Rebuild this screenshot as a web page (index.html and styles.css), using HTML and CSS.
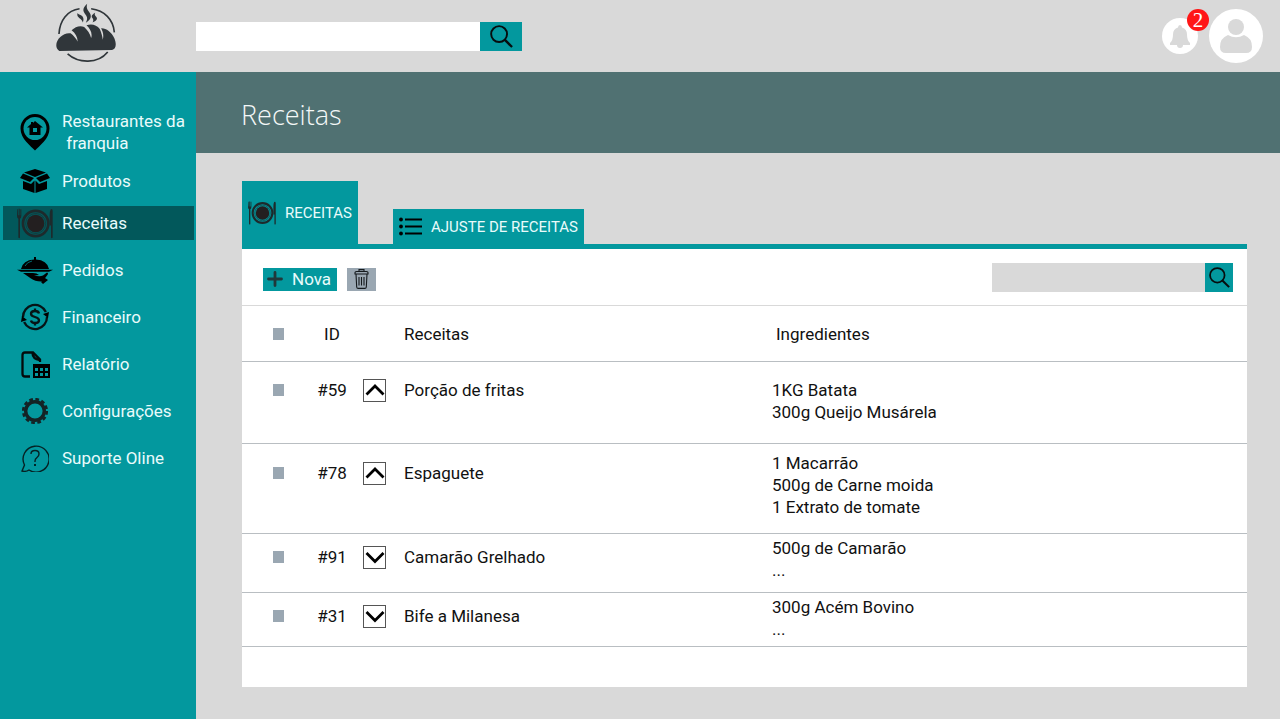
FILE: index.html
```html
<!DOCTYPE html>
<html lang="pt-BR">
<head>
<meta charset="utf-8">
<meta name="viewport" content="width=device-width, initial-scale=1">
<title>Receitas</title>
<link rel="stylesheet" href="styles.css">
</head>
<body>
<svg class="sprite" aria-hidden="true">
  <symbol id="search" viewBox="0 0 24 24"><g fill="none" stroke="#060d0e" stroke-width="2"><circle cx="9.500" cy="9.500" r="8.300"/><path d="M15.300 15.300 23 23" stroke-width="2.400"/></g></symbol>
  <symbol id="plate" viewBox="0 0 108 92"><g fill="#1d2a2c"><circle cx="56" cy="46" r="26" fill="#231f20"/><circle cx="56" cy="46" r="38" fill="none" stroke="#1d2a2c" stroke-width="8"/><circle cx="56" cy="46" r="30" fill="none" stroke="#1d2a2c" stroke-width="2"/><path d="M1 3h2v18h2V2h3v19h2V3h3v20q0 7-4 9v56q-2 4-5 0V32q-4-2-4-9zM101 4q5-4 6 4v80q-3 4-5 0V52h-4V20q0-10 3-16z"/></g></symbol>
  <symbol id="up" viewBox="0 0 20 20"><path d="M1.500 13.500 10 5l8.500 8.500" fill="none" stroke="#000" stroke-width="2.800"/></symbol>
  <symbol id="down" viewBox="0 0 20 20"><path d="M1.500 5 10 13.500 18.500 5" fill="none" stroke="#000" stroke-width="2.800"/></symbol>
</svg>
<header class="topbar">
  <a class="brand" href="#" aria-label="Início">
    <svg viewBox="165 10 187 180" width="62" height="60">
      <g fill="none" stroke="#30363a" stroke-width="5"><path d="M177 103C179 62 202 32 239 27M274 27C314 32 341 59 344 98M203 163C236 192 294 194 324 157"/></g>
      <g fill="#30363a">
        <path d="M178 154C164 146 167 124 181 112 190 104 201 99 212 101 221 108 229 117 233 126 234 115 227 101 215 92 226 81 241 76 253 82 263 91 271 103 274 115 279 101 270 86 260 77 274 71 291 75 300 88 305 99 308 110 309 120 313 107 309 95 304 86 319 85 335 97 344 116 352 136 348 148 337 151 286 153 229 152 178 154Z"/>
        <path d="M262 12C243 28 252 38 259 47 264 54 262 61 258 69 274 61 277 48 268 37 260 27 260 21 262 12ZM233 40C230 50 237 54 242 58 247 62 247 65 249 68 254 57 249 49 242 46 236 43 234 43 233 40ZM286 39C274 46 274 51 279 56 282 61 280 65 278 68 290 64 295 57 289 51 284 45 284 43 286 39Z"/>
      </g>
    </svg>
  </a>
  <form class="search search-main" role="search">
    <input type="search" aria-label="Pesquisar">
    <button type="button" aria-label="Pesquisar"><svg width="23" height="23"><use href="#search"/></svg></button>
  </form>
  <div class="account">
    <button class="bell" type="button" aria-label="Notificações">
      <svg viewBox="0 0 20 23" width="20" height="23"><path d="M10 0q2 0 2 2.500 5 1.500 5 7 0 6 3 8.500v2h-7a3 3 0 0 1-6 0H0v-2q3-2.500 3-8.500 0-5.500 5-7Q8 0 10 0z" fill="#d9d9d9"/></svg>
      <span class="badge">2</span>
    </button>
    <button class="avatar" type="button" aria-label="Perfil">
      <svg viewBox="0 0 32 36" width="32" height="36"><g fill="#d9d9d9"><circle cx="16" cy="9" r="8"/><path d="M8 17q8 4.500 16 0 8 3 8 12 0 6-6 6H6q-6 0-6-6 0-9 8-12z"/></g></svg>
    </button>
  </div>
</header>
<div class="shell">
  <nav class="sidebar" aria-label="Principal">
    <div class="group">
      <a class="item" href="#"><svg viewBox="0 0 30 37" width="30" height="37"><path d="M15 0a14.500 14.500 0 0 1 14.500 14.500C29.500 25 19 32 15 36.500 11 32 .5 25 .5 14.500A14.500 14.500 0 0 1 15 0z"/><circle cx="15" cy="14.500" r="11.500" fill="#03989e"/><path d="M15 7l8 6.500h-2.500V21h-11v-7.500H7L11 10V8h2v1z"/><path d="M13 14h4v4h-4z" fill="#03989e"/></svg><span>Restaurantes da<br>&nbsp;franquia</span></a>
      <a class="item" href="#"><svg viewBox="0 0 30 26" width="30" height="26"><path d="M15 1l11 3.500-11 4.500L4 4.500zM3 5.500l11 4.500-4 4L0 10zM27 5.500L16 10l4 4 10-4zM3 13l8 3 3.500-3.500V25L3 21zM27 13l-8 3-3.500-3.500V25L27 21z"/></svg><span>Produtos</span></a>
      <a class="item active" href="#" aria-current="page"><svg width="36" height="31"><use href="#plate"/></svg><span>Receitas</span></a>
    </div>
    <div class="group spaced">
      <a class="item" href="#"><svg viewBox="0 0 36 27" width="36" height="27"><path d="M4 12Q6 3 17 2.500V0h2v2.500Q30 3 32 12zM0 12.800h36l-4 2H4zM6 16h10q4 0 6 2l-5 .5q6 1.500 9 0l4-3q2 .5 0 3l-3 4-3 2q-6 0-10-3zM28 21l3 2-5 4-2-2z"/><path d="M8 9q2-4 7-5" fill="none" stroke="#03989e" stroke-width=".7"/></svg><span>Pedidos</span></a>
      <a class="item" href="#"><svg viewBox="0 0 28 28" width="28" height="28"><g fill="none" stroke="#061416" stroke-width="2.300"><path d="M2 14A12 12 0 0 1 24.900 8.900M26 14A12 12 0 0 1 3.100 19.100"/><path d="M18 10.500q-.5-2.500-4-2.500-4 0-4 2.800 0 2.200 4 3.200 4 1 4 3.200 0 2.800-4 2.800-3.500 0-4-2.500M14 5.500V8M14 20v2.500"/></g><path d="M28 9l-1 6-5-4zM0 19l1-6 5 4z"/></svg><span>Financeiro</span></a>
      <a class="item" href="#"><svg viewBox="0 0 29 27" width="29" height="27"><path d="M9 25.500H4q-2.500 0-2.500-2.500V4Q1.500 1.500 4 1.500h8l7 7V11M11.500 2q0 6 7.500 7" fill="none" stroke="#040a0b" stroke-width="2.300"/><path d="M12 13h17v14H12z"/><path d="M14 17h3v3h-3zM19 17h3v3h-3zM24 17h3v3h-3zM14 22h3v3h-3zM19 22h3v3h-3zM24 22h3v3h-3z" fill="#03989e"/></svg><span>Relatório</span></a>
      <a class="item" href="#"><svg viewBox="0 0 26 26" width="26" height="26"><g fill="none" stroke="#142325"><circle cx="13" cy="13" r="9.300" stroke-width="3.400"/><circle cx="13" cy="13" r="11.800" stroke-width="2.600" stroke-dasharray="3.700 2.479"/></g></svg><span>Configurações</span></a>
      <a class="item" href="#"><svg viewBox="0 0 28 28" width="28" height="28"><path d="M1 27l2.500-6A13 13 0 1 1 8 26q-3 2-7 1zM10 10q0-3.500 4-3.500t4 3.500q0 2-2 3.500t-2 3.500v1" fill="none" stroke="#062224" stroke-width="1.400"/><circle cx="14" cy="21" r="1"/></svg><span>Suporte Oline</span></a>
    </div>
  </nav>
  <main>
    <div class="titlebar"><h1>Receitas</h1></div>
    <div class="content">
      <div class="tabs" role="tablist">
        <button class="tab selected" type="button" role="tab" aria-selected="true"><svg width="28" height="24"><use href="#plate"/></svg>RECEITAS</button>
        <button class="tab" type="button" role="tab" aria-selected="false"><svg viewBox="0 0 23 19" width="23" height="19"><path d="M6 2.500h17M6 9.500h17M6 16.500h17" stroke="#000" stroke-width="2.200"/><circle cx="2" cy="2.500" r="1.900"/><circle cx="2" cy="9.500" r="1.900"/><circle cx="2" cy="16.500" r="1.900"/></svg>AJUSTE DE RECEITAS</button>
      </div>
      <section class="panel">
        <div class="toolbar">
          <button class="new" type="button"><svg viewBox="0 0 16 16" width="16" height="16"><path d="M8 1.500v13M1.500 8h13" stroke="#20383b" stroke-width="2.800" stroke-linecap="round"/></svg>Nova</button>
          <button class="trash" type="button" aria-label="Excluir"><svg viewBox="0 0 15 20" width="15" height="20"><g fill="none" stroke="#14191c" stroke-width="1.100"><path d="M1 5V3.500Q1 2.500 2.500 2.500h10Q14 2.500 14 3.500V5zM5 2.500V.6h5v1.900M2 5l.7 13q.1 1.400 1.500 1.400h6.600q1.400 0 1.500-1.400L13 5M5 8v8.500M7.500 8v8.500M10 8v8.500"/></g></svg></button>
          <form class="search search-table" role="search">
            <input type="search" aria-label="Pesquisar receitas">
            <button type="button" aria-label="Pesquisar receitas"><svg width="21" height="21"><use href="#search"/></svg></button>
          </form>
        </div>
        <table>
          <colgroup><col class="c-check"><col class="c-id"><col class="c-toggle"><col><col class="c-ingr"></colgroup>
          <thead>
            <tr><th><input type="checkbox" aria-label="Selecionar todas"></th><th class="id">ID</th><th></th><th>Receitas</th><th>Ingredientes</th></tr>
          </thead>
          <tbody>
            <tr class="two"><td><input type="checkbox" aria-label="Selecionar #59"></td><td class="id">#59</td><td><button class="toggle" type="button" aria-label="Recolher" aria-expanded="true"><svg width="20" height="20"><use href="#up"/></svg></button></td><td>Porção de fritas</td><td>1KG Batata<br>300g Queijo Musárela</td></tr>
            <tr class="three"><td><input type="checkbox" aria-label="Selecionar #78"></td><td class="id">#78</td><td><button class="toggle" type="button" aria-label="Recolher" aria-expanded="true"><svg width="20" height="20"><use href="#up"/></svg></button></td><td>Espaguete</td><td class="ingr">1 Macarrão<br>500g de Carne moida<br>1 Extrato de tomate</td></tr>
            <tr class="closed"><td><input type="checkbox" aria-label="Selecionar #91"></td><td class="id">#91</td><td><button class="toggle" type="button" aria-label="Expandir" aria-expanded="false"><svg width="20" height="20"><use href="#down"/></svg></button></td><td>Camarão Grelhado</td><td class="ingr">500g de Camarão<br>...</td></tr>
            <tr class="closed"><td><input type="checkbox" aria-label="Selecionar #31"></td><td class="id">#31</td><td><button class="toggle" type="button" aria-label="Expandir" aria-expanded="false"><svg width="20" height="20"><use href="#down"/></svg></button></td><td>Bife a Milanesa</td><td class="ingr">300g Acém Bovino<br>...</td></tr>
          </tbody>
        </table>
      </section>
    </div>
  </main>
</div>
</body>
</html>
```

FILE: styles.css
```css
* { box-sizing: border-box; }
body {
  margin: 0;
  min-height: 100vh;
  display: flex;
  flex-direction: column;
  background: #d9d9d9;
  color: #111;
  font: 17px/22px Roboto, "Liberation Sans", sans-serif;
}
button, input { font: inherit; color: inherit; border: 0; border-radius: 0; margin: 0; padding: 0; }
button { cursor: pointer; }
svg { display: block; flex: none; }
.sprite { position: absolute; width: 0; height: 0; }

.topbar { display: flex; align-items: center; height: 72px; padding-right: 17px; }
.brand { width: 196px; padding: 0 0 6px 55px; }
.search { display: flex; height: 29px; }
.search input { flex: 1; min-width: 0; padding: 0 8px; appearance: none; outline: none; }
.search button { display: grid; place-items: center; background: #03989e; }
.search-main { width: 326px; }
.search-main input { background: #fff; }
.search-main button { width: 42px; }
.account { display: flex; align-items: center; gap: 11px; margin-left: auto; }
.bell, .avatar { display: grid; place-items: center; background: #fff; border-radius: 50%; }
.bell { position: relative; width: 36px; height: 36px; }
.avatar { width: 54px; height: 54px; }
.badge {
  position: absolute;
  top: -9px;
  right: -11px;
  width: 22px;
  height: 22px;
  border-radius: 50%;
  background: #ff1616;
  color: #fff;
  font: 21px/22px "Liberation Serif", serif;
  text-align: center;
}

.shell { flex: 1; display: flex; }
.sidebar { flex: none; width: 196px; padding: 36px 2px 36px 3px; background: #03989e; }
.group { display: flex; flex-direction: column; gap: 8px; }
.spaced { gap: 13px; margin-top: 13px; }
.item {
  display: grid;
  grid-template-columns: 64px 1fr;
  align-items: center;
  min-height: 34px;
  color: #e9fbfb;
  text-decoration: none;
  white-space: nowrap;
}
.item svg { justify-self: center; }
.item span { margin-left: -5px; }
.item:first-child { min-height: 48px; }
.spaced .item:first-child { min-height: 34px; }
.active { background: #02585b; }

main { flex: 1; min-width: 0; }
.titlebar { padding: 25px 45px 20px; background: #507172; }
h1 { margin: 0; color: #f4f8f8; font: 300 27px/36px "Open Sans", sans-serif; }
.content { padding: 28px 33px 32px 46px; }
.tabs { display: flex; align-items: flex-end; gap: 35px; border-bottom: 5px solid #03989e; }
.tab {
  display: flex;
  align-items: center;
  gap: 9px;
  height: 35px;
  padding: 0 6px;
  background: #03989e;
  color: #e9fbfb;
  font-size: 15px;
  white-space: nowrap;
}
.selected { height: 63px; }

.panel { padding-bottom: 40px; background: #fff; }
.toolbar { display: flex; align-items: center; gap: 10px; height: 57px; padding: 0 14px 0 21px; border-bottom: 1px solid #d9d9d9; }
.new, .trash { height: 23px; margin-top: 4px; }
.new { display: flex; align-items: center; gap: 9px; padding: 0 6px 0 4px; background: #03989e; color: #e9fbfb; }
.trash { display: grid; place-items: center; width: 29px; background: #9aa7b2; }
.search-table { width: 241px; margin-left: auto; }
.search-table input { background: #d9d9d9; }
.search-table button { width: 28px; }

table { width: 100%; table-layout: fixed; border-collapse: separate; border-spacing: 0; }
.c-check { width: 68px; }
.c-id { width: 44px; }
.c-toggle { width: 50px; }
.c-ingr { width: 475px; }
th, td { padding: 0; border-bottom: 1px solid #b9bec2; text-align: left; vertical-align: top; font-weight: 400; }
th { height: 56px; vertical-align: middle; }
th:first-child, td:first-child { padding-left: 31px; }
th:last-child { padding-left: 4px; }
.id { text-align: center; }
td:nth-child(3) { padding-left: 9px; }
input[type="checkbox"] { display: block; appearance: none; width: 11px; height: 12px; background: #9aa7b2; }
td input[type="checkbox"] { margin: 5px 0; }
.toggle { display: grid; place-items: center; width: 23px; height: 23px; border: 1px solid #555; background: #fff; }
.two td { height: 82px; padding-top: 17px; }
.three td { height: 90px; padding-top: 18px; }
.three .ingr { padding-top: 8px; }
.closed td { height: 59px; padding-top: 12px; }
.closed:last-child td { height: 54px; }
.closed .ingr { padding-top: 3px; }
```
